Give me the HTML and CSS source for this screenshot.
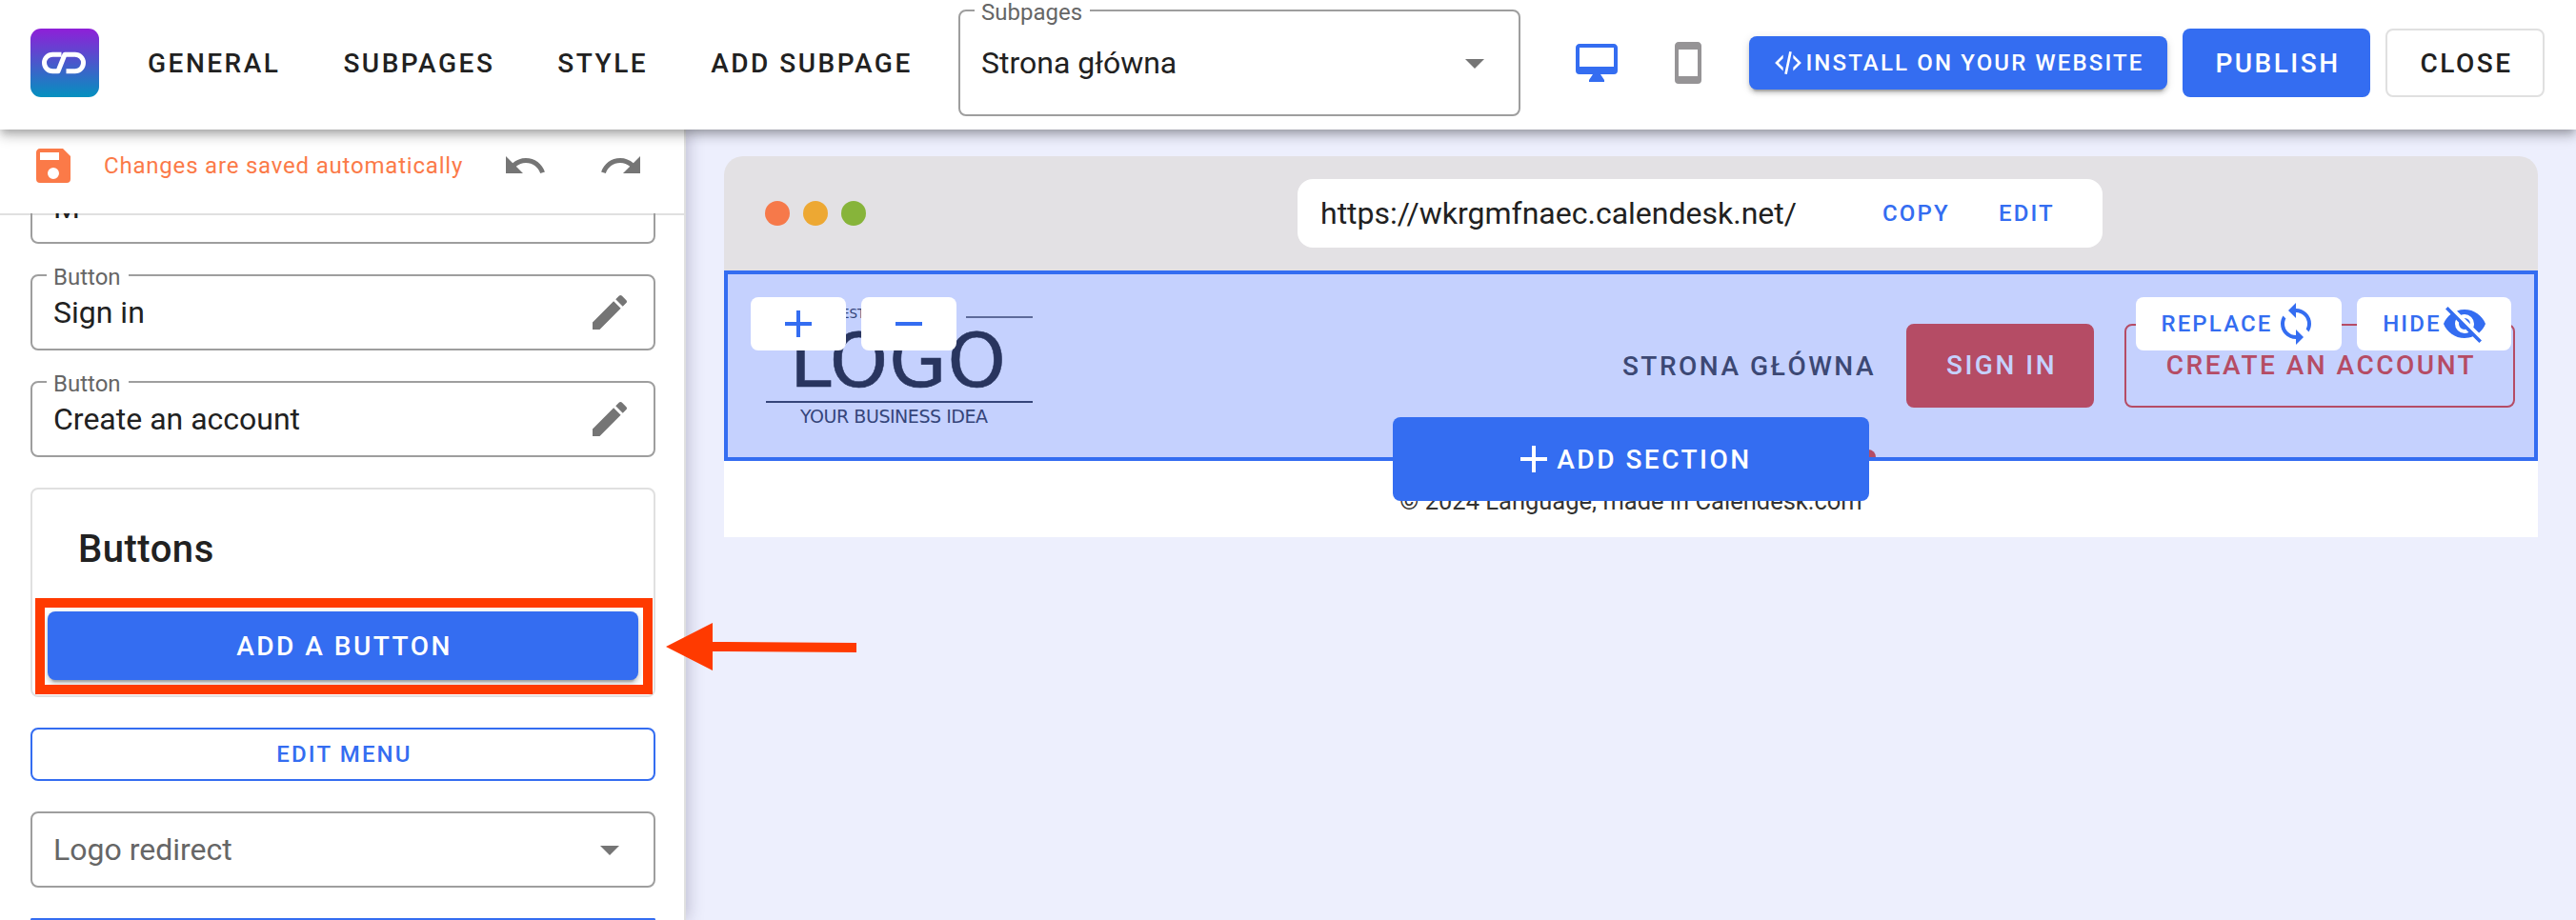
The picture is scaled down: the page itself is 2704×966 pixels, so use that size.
FILE: index.html
```
<!DOCTYPE html>
<html lang="en">
<head>
    <meta charset="UTF-8">
    <meta name="viewport" content="width=device-width, initial-scale=1.0">
    <title>Page editor</title>
    <link rel="stylesheet" href="styles.css">
</head>
<body>
    <header class="topbar">
        <svg class="app-logo" viewBox="0 0 72 72">
            <defs>
                <linearGradient id="logoFill" x1="0" y1="0" x2="0" y2="1">
                    <stop offset="0" stop-color="#8f1fd8"/>
                    <stop offset="1" stop-color="#0491bf"/>
                </linearGradient>
            </defs>
            <rect width="72" height="72" rx="11" fill="url(#logoFill)"/>
            <path d="M32.500 27.250H23.250a8.750 8.750 0 0 0 0 17.500H29L36 27.250H46.750a8.750 8.750 0 0 1 0 17.500H37.500" fill="none" stroke="#fff" stroke-width="5" stroke-linejoin="round"/>
        </svg>
        <nav class="menu">
            <span>General</span>
            <span>Subpages</span>
            <span>Style</span>
            <span>Add subpage</span>
        </nav>
        <div class="field subpage-select">
            <span class="label">Subpages</span>
            <span class="value">Strona główna</span>
            <svg class="icon grey" viewBox="0 0 24 24"><path d="M7,10L12,15L17,10H7Z"/></svg>
        </div>
        <div class="devices">
            <svg class="icon blue" viewBox="0 0 24 24"><path d="M21,14H3V4H21M21,2H3C1.890,2 1,2.890 1,4V16A2,2 0 0,0 3,18H10L8,21V22H16V21L14,18H21A2,2 0 0,0 23,16V4C23,2.890 22.100,2 21,2Z"/></svg>
            <svg class="icon light" viewBox="0 0 24 24"><path d="M17,19H7V5H17M17,1H7C5.890,1 5,1.890 5,3V21A2,2 0 0,0 7,23H17A2,2 0 0,0 19,21V3C19,1.890 18.100,1 17,1Z"/></svg>
        </div>
        <div class="actions">
            <button class="btn small primary raised install">
                <svg class="icon-code" viewBox="0 0 24 24"><path d="M12.890,3L14.850,3.400L11.110,21L9.150,20.600L12.890,3M19.590,12L16,8.410V5.580L22.420,12L16,18.410V15.580L19.590,12M1.580,12L8,5.580V8.410L4.410,12L8,15.580V18.410L1.580,12Z"/></svg>
                Install on your website
            </button>
            <button class="btn primary publish">Publish</button>
            <button class="btn outlined close">Close</button>
        </div>
    </header>

    <div class="main">
        <aside class="sidebar">
            <div class="save-bar">
                <svg class="icon orange" viewBox="0 0 24 24"><path d="M15,9H5V5H15M12,19A3,3 0 0,1 9,16A3,3 0 0,1 12,13A3,3 0 0,1 15,16A3,3 0 0,1 12,19M17,3H5C3.890,3 3,3.900 3,5V19A2,2 0 0,0 5,21H19A2,2 0 0,0 21,19V7L17,3Z"/></svg>
                <span class="save-text">Changes are saved automatically</span>
                <svg class="icon grey" viewBox="0 0 24 24"><path d="M12.500,8C9.850,8 7.450,9 5.600,10.600L2,7V16H11L7.380,12.380C8.770,11.220 10.540,10.500 12.500,10.500C16.040,10.500 19.050,12.810 20.100,16L22.470,15.220C21.080,11.030 17.150,8 12.500,8Z"/></svg>
                <svg class="icon grey redo" viewBox="0 0 24 24"><path d="M18.400,10.600C16.550,9 14.150,8 11.500,8C6.850,8 2.920,11.030 1.540,15.220L3.900,16C4.950,12.810 7.950,10.500 11.500,10.500C13.450,10.500 15.230,11.220 16.620,12.380L13,16H22V7L18.400,10.600Z"/></svg>
            </div>
            <div class="panel">
                <div class="field scrolled"><span class="value">M</span></div>
                <div class="field">
                    <span class="label">Button</span>
                    <span class="value">Sign in</span>
                    <svg class="icon grey" viewBox="0 0 24 24"><path d="M20.710,7.040C21.100,6.650 21.100,6 20.710,5.630L18.370,3.290C18,2.900 17.350,2.900 16.960,3.290L15.120,5.120L18.870,8.870M3,17.250V21H6.750L17.810,9.930L14.060,6.180L3,17.250Z"/></svg>
                </div>
                <div class="field">
                    <span class="label">Button</span>
                    <span class="value">Create an account</span>
                    <svg class="icon grey" viewBox="0 0 24 24"><path d="M20.710,7.040C21.100,6.650 21.100,6 20.710,5.630L18.370,3.290C18,2.900 17.350,2.900 16.960,3.290L15.120,5.120L18.870,8.870M3,17.250V21H6.750L17.810,9.930L14.060,6.180L3,17.250Z"/></svg>
                </div>
                <div class="card">
                    <h2>Buttons</h2>
                    <button class="btn primary raised add-button">Add a button</button>
                    <div class="highlight"></div>
                    <svg class="arrow" viewBox="0 0 200 50"><path d="M0 25L49 0V20L200 21V31L49 30V50Z"/></svg>
                </div>
                <button class="btn small edit-menu">Edit menu</button>
                <div class="field redirect">
                    <span class="value">Logo redirect</span>
                    <svg class="icon grey" viewBox="0 0 24 24"><path d="M7,10L12,15L17,10H7Z"/></svg>
                </div>
                <button class="btn small edit-menu"></button>
            </div>
        </aside>

        <main class="canvas">
            <div class="browser">
                <div class="browser-bar">
                    <div class="dots">
                        <i class="dot dot-red"></i>
                        <i class="dot dot-yellow"></i>
                        <i class="dot dot-green"></i>
                    </div>
                    <div class="address">
                        <span class="url">https://wkrgmfnaec.calendesk.net/</span>
                        <span class="link">Copy</span>
                        <span class="link">Edit</span>
                    </div>
                </div>
                <section class="site-header">
                    <svg class="site-logo" viewBox="0 0 280 130">
                        <path d="M0 15H70M210 15H280" stroke="#5d6a9a" stroke-width="2"/>
                        <text x="79" y="16" font-size="13.500">ESTABLISHED</text>
                        <text class="logo-word" x="25" y="88" font-size="78" textLength="227">LOGO</text>
                        <path d="M0 104H280" stroke="#35457a" stroke-width="2"/>
                        <text x="36" y="126" font-size="19" textLength="197">YOUR BUSINESS IDEA</text>
                    </svg>
                    <nav class="site-nav">
                        <span class="site-link">Strona główna</span>
                        <span class="site-btn filled">Sign in</span>
                        <span class="site-btn">Create an account</span>
                    </nav>
                    <div class="size-tools">
                        <button class="tool"><svg class="icon" viewBox="0 0 24 24"><path d="M19,13H13V19H11V13H5V11H11V5H13V11H19V13Z"/></svg></button>
                        <button class="tool"><svg class="icon" viewBox="0 0 24 24"><path d="M19,13H5V11H19V13Z"/></svg></button>
                    </div>
                    <div class="section-tools">
                        <button class="tool replace">Replace<svg class="icon" viewBox="0 0 24 24"><path d="M12,18A6,6 0 0,1 6,12C6,11 6.250,10.030 6.700,9.200L5.240,7.740C4.460,8.970 4,10.430 4,12A8,8 0 0,0 12,20V23L16,19L12,15M12,4V1L8,5L12,9V6A6,6 0 0,1 18,12C18,13 17.750,13.970 17.300,14.800L18.760,16.260C19.540,15.030 20,13.570 20,12A8,8 0 0,0 12,4Z"/></svg></button>
                        <button class="tool hide">Hide<svg class="icon" viewBox="0 0 24 24"><path d="M11.830,9L15,12.160C15,12.110 15,12.050 15,12A3,3 0 0,0 12,9C11.940,9 11.890,9 11.830,9M7.530,9.800L9.080,11.350C9.030,11.560 9,11.770 9,12A3,3 0 0,0 12,15C12.220,15 12.440,14.970 12.650,14.920L14.200,16.470C13.530,16.800 12.790,17 12,17A5,5 0 0,1 7,12C7,11.210 7.200,10.470 7.530,9.800M2,4.270L4.280,6.550L4.730,7C3.080,8.300 1.780,10 1,12C2.730,16.390 7,19.500 12,19.500C13.550,19.500 15.030,19.200 16.380,18.660L16.810,19.080L19.730,22L21,20.730L3.270,3M12,7A5,5 0 0,1 17,12C17,12.640 16.870,13.260 16.640,13.820L19.570,16.750C21.070,15.500 22.270,13.860 23,12C21.270,7.610 17,4.500 12,4.500C10.600,4.500 9.260,4.750 8,5.200L10.170,7.350C10.740,7.130 11.350,7 12,7Z"/></svg></button>
                    </div>
                    <i class="marker"></i>
                    <button class="btn primary add-section"><svg class="icon" viewBox="0 0 24 24"><path d="M19,13H13V19H11V13H5V11H11V5H13V11H19V13Z"/></svg>Add section</button>
                </section>
                <footer class="site-footer">© 2024 Language, made in Calendesk.com</footer>
            </div>
        </main>
    </div>
</body>
</html>
```
FILE: styles.css
```
* { box-sizing: border-box; }
html { overflow: hidden; }
body { margin: 0; height: 966px; overflow: hidden; font-family: Roboto, "Liberation Sans", sans-serif; color: #212121; background: #edeffd; }
button { font-family: inherit; border: 0; margin: 0; }
svg { display: block; flex: none; }

.icon { width: 48px; height: 48px; fill: currentColor; }
.grey { color: #757575; }
.light { color: #969496; }
.blue { color: #346df1; }
.orange { color: #fb7a48; }

/* buttons */
.btn { display: flex; align-items: center; justify-content: center; height: 72px; padding: 0 0 0 3px; border-radius: 8px; font-size: 28px; font-weight: 500; letter-spacing: 0.0892857em; text-transform: uppercase; white-space: nowrap; background: #fff; color: #212121; }
.small { height: 56px; font-size: 24px; }
.primary { background: #346df1; color: #fff; }
.raised { box-shadow: 0 6px 2px -4px rgba(0,0,0,.2), 0 4px 4px rgba(0,0,0,.14), 0 2px 10px rgba(0,0,0,.12); }
.outlined { border: 2px solid #e0e0e0; }

/* top bar */
.topbar { position: relative; z-index: 2; display: flex; height: 136px; padding: 0 32px; background: #fff; box-shadow: 0 4px 8px -2px rgba(0,0,0,.2), 0 8px 10px rgba(0,0,0,.14), 0 2px 20px rgba(0,0,0,.12); }
.app-logo { width: 72px; height: 72px; margin-top: 30px; }
.menu { display: flex; gap: 66px; width: 851px; margin: 51px 0 0 51px; font-size: 28px; line-height: 32px; font-weight: 500; letter-spacing: 0.0892857em; text-transform: uppercase; white-space: nowrap; }
.devices { display: flex; gap: 48px; margin: 42px 0 0 56px; }
.actions { display: flex; align-items: center; gap: 16px; height: 72px; margin: 30px 0 0 40px; }
.install { width: 439px; padding-left: 1px; }
.publish { width: 197px; }
.close { width: 167px; }
.icon-code { width: 32px; height: 32px; margin-right: 2px; fill: #fff; }

/* outlined fields */
.field { position: relative; display: flex; align-items: center; justify-content: space-between; height: 80px; padding: 0 22px; border: 2px solid #9e9e9e; border-radius: 8px; }
.label { position: absolute; top: -13px; left: 15px; padding: 0 8px 0 7px; background: #fff; color: #666; font-size: 24px; line-height: 28px; }
.value { font-size: 32px; line-height: 40px; }
.subpage-select { width: 590px; height: 112px; margin-top: 10px; }

/* sidebar */
.main { display: flex; height: 830px; }
.sidebar { position: relative; z-index: 1; width: 720px; height: 830px; background: #fff; border-right: 2px solid #e0e0e0; box-shadow: 2px 0 16px rgba(60,50,90,.28); }
.save-bar { display: flex; align-items: center; height: 88px; padding: 0 0 12px 32px; background: #fff; box-shadow: 0 2px 0 #e0e0e0; }
.save-text { width: 418px; margin-left: 29px; color: #fb7a48; font-size: 24px; letter-spacing: 0.0333em; white-space: nowrap; }
.redo { margin-left: 53px; }
/* clipped at the top where it scrolls under the save bar */
.panel { display: flex; flex-direction: column; gap: 32px; height: 742px; padding: 0 30px 0 32px; clip-path: inset(0 -200px 0 0); }
.panel > * { flex: none; }
.scrolled { margin-top: -48px; padding-top: 4px; }
.redirect { color: #666; }
.card { position: relative; height: 220px; padding: 31px 16px 0; border: 2px solid #e0e0e0; border-radius: 8px; }
.card h2 { margin: 0 0 33px 32px; font-size: 40px; line-height: 64px; font-weight: 500; letter-spacing: 0.0125em; }
.add-button { width: 620px; }
.highlight { position: absolute; left: 3px; top: 114px; width: 648px; height: 101px; border: 10px solid #ff3a00; }
.arrow { position: absolute; left: 665px; top: 140px; width: 200px; height: 50px; fill: #ff3a00; }
.edit-menu { border: 2px solid #346df1; color: #346df1; }
.edit-menu:last-child { height: 2px; border-radius: 8px 8px 0 0; border-bottom: 0; }

/* page preview */
.canvas { flex: 1; padding: 28px 40px 0; }
.browser-bar { display: flex; height: 120px; padding: 24px 42px 24px 43px; background: #e3e1e4; border-radius: 20px 20px 0 0; }
.dots { display: flex; align-items: center; gap: 14px; width: 559px; }
.dot { width: 26px; height: 26px; border-radius: 50%; }
.dot-red { background: #f6794a; }
.dot-yellow { background: #eda833; }
.dot-green { background: #87b43a; }
.address { display: flex; align-items: center; width: 845px; height: 72px; padding-left: 24px; background: #fff; border-radius: 16px; font-size: 32px; }
.url { flex: none; width: 590px; }
.link { flex: none; width: 122px; color: #346df1; font-size: 24px; font-weight: 500; letter-spacing: 0.0892857em; text-transform: uppercase; }

.site-header { position: relative; display: flex; justify-content: space-between; height: 200px; padding: 30px 20px 0 40px; border: 4px solid #346df1; background: #c5d1fe; }
.site-logo { width: 280px; height: 130px; font-family: "DejaVu Sans", sans-serif; fill: #35457a; }
.logo-word { fill: #29355f; stroke: #29355f; stroke-width: 0.6; }
.site-nav { display: flex; align-items: center; height: 88px; margin-top: 22px; font-size: 28px; font-weight: 500; letter-spacing: 0.0892857em; text-transform: uppercase; white-space: nowrap; }
.site-link { color: #3c4874; }
.site-btn { width: 410px; height: 88px; margin-left: 32px; padding-left: 3px; border: 2px solid #b54c65; border-radius: 8px; color: #b54c65; line-height: 84px; text-align: center; }
.filled { width: 197px; background: #b54c65; color: #c5d1fe; }

/* controls lying over the selected section */
.size-tools, .section-tools { position: absolute; top: 24px; display: flex; gap: 16px; }
.size-tools { left: 24px; }
.section-tools { right: 24px; }
.tool { display: flex; align-items: center; justify-content: center; width: 100px; height: 56px; padding: 0; border-radius: 8px; background: #fff; color: #346df1; font-size: 24px; font-weight: 500; letter-spacing: 0.0892857em; text-transform: uppercase; }
.replace { width: 216px; padding-left: 2px; }
.hide { width: 162px; padding-left: 2px; }
.marker { position: absolute; left: 1174px; bottom: 0; width: 31px; height: 8px; border-radius: 16px 16px 0 0; background: #b54c65; }
.add-section { position: absolute; left: 698px; top: 150px; width: 500px; height: 88px; padding-left: 1px; }
.site-footer { height: 80px; padding-top: 26px; background: #fff; color: #333; font-size: 25.5px; line-height: 32px; text-align: center; }
```
